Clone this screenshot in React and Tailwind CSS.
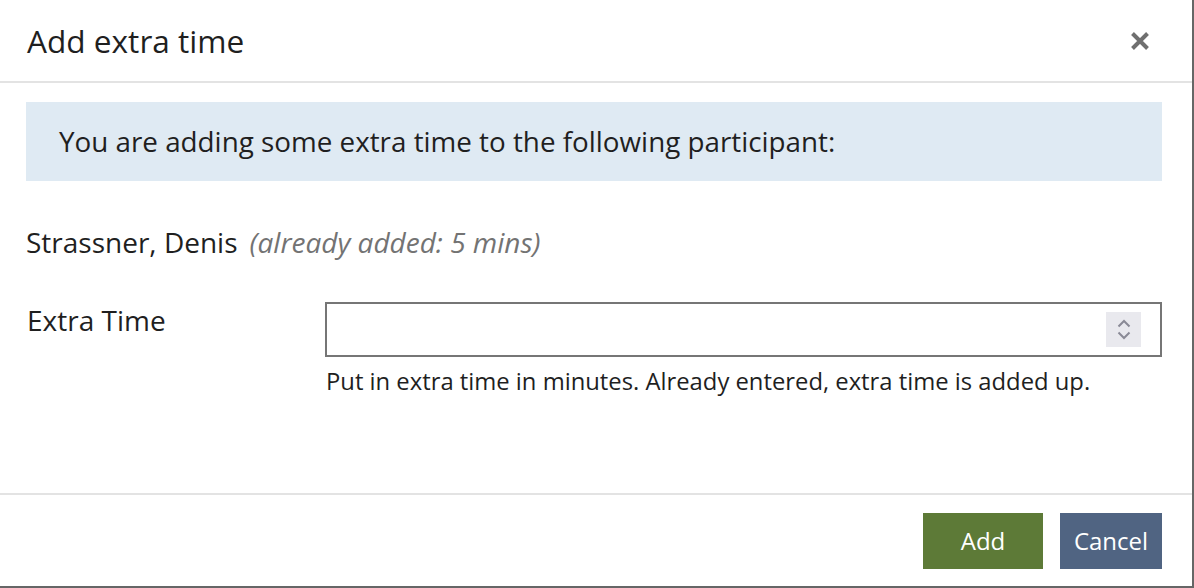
import React from "react";

export default function App() {
  return (
    <div className="w-[1194px] h-[588px] bg-white">
      <div
        className="w-[1194px] h-[588px] bg-white border-r-2 border-b-2 border-[#666666] flex flex-col text-[#1f1f1f]"
        style={{ fontFamily: '"Open Sans", "Noto Sans", sans-serif' }}
      >
        <div className="h-[83px] shrink-0 border-b-2 border-[#e3e3e3] flex items-center justify-between pl-[27px] pr-[42px]">
          <h1 className="text-[31.6px] leading-none font-normal">Add extra time</h1>
          <svg width="20" height="20" viewBox="0 0 20 20" className="text-[#6f6f6f]">
            <path d="M2.5 2.5 L17.5 17.5 M17.5 2.5 L2.5 17.5" stroke="currentColor" strokeWidth="4" strokeLinecap="butt" />
          </svg>
        </div>
        <div className="flex-1 pl-[26px] pr-[30px] pt-[19px]">
          <div className="bg-[#dfeaf3] h-[79px] flex items-center pl-[33px] text-[27.8px] leading-none">
            You are adding some extra time to the following participant:
          </div>
          <div className="mt-[41px] text-[28px] leading-[40px] flex items-baseline">
            <span>Strassner, Denis</span>
            <span className="italic text-[#737373] ml-[12px]">(already added: 5 mins)</span>
          </div>
          <div className="mt-[40px] flex">
            <div className="w-[299px] pl-[1px] text-[28px] leading-[40px] -mt-[2px]">Extra Time</div>
            <div className="flex-1">
              <div className="h-[55px] border-2 border-[#767676] flex items-center justify-end pr-[19px]">
                <div className="w-[35px] h-[35px] bg-[#e9e9ee] flex flex-col items-center justify-center gap-[3px]">
                  <svg width="14" height="9" viewBox="0 0 14 9">
                    <path d="M1.5 7.5 L7 2 L12.5 7.5" stroke="#8a8a96" strokeWidth="2" fill="none" />
                  </svg>
                  <svg width="14" height="9" viewBox="0 0 14 9">
                    <path d="M1.5 1.5 L7 7 L12.5 1.5" stroke="#8a8a96" strokeWidth="2" fill="none" />
                  </svg>
                </div>
              </div>
              <div className="mt-[8px] text-[23.8px] leading-[32px] pl-[1px]">
                Put in extra time in minutes. Already entered, extra time is added up.
              </div>
            </div>
          </div>
        </div>
        <div className="h-[93px] shrink-0 border-t-2 border-[#e3e3e3] flex items-center justify-end gap-[17px] pr-[30px]">
          <button className="w-[120px] h-[56px] bg-[#5d7a37] text-white text-[24px]">Add</button>
          <button className="w-[102px] h-[56px] bg-[#506482] text-white text-[24px]">Cancel</button>
        </div>
      </div>
    </div>
  );
}
